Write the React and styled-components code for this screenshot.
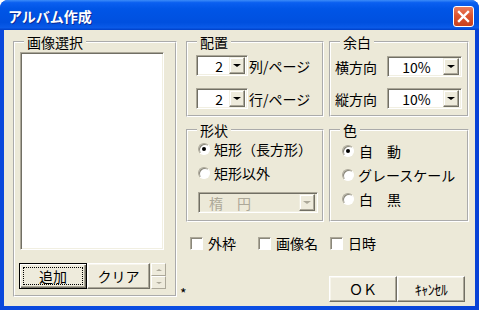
import React from "react"
import styled, { createGlobalStyle, css } from "styled-components"

const GlobalStyle = createGlobalStyle`
  html, body {
    margin: 0;
    padding: 0;
    background: #fff;
  }
  body {
    font-family: "Noto Sans CJK JP", "Liberation Sans", sans-serif;
    font-size: 14px;
    line-height: 14px;
    color: #000;
  }
  * {
    box-sizing: border-box;
  }
`

const Window = styled.div`
  width: 479px;
  height: 310px;
  display: flex;
  flex-direction: column;
  background: linear-gradient(90deg, #0a48dc, #0b4fe4 50%, #0842d6);
  border-radius: 8px 8px 0 0;
  overflow: hidden;
`

const TitleBar = styled.div`
  height: 30px;
  flex: none;
  display: flex;
  align-items: center;
  justify-content: space-between;
  padding: 2px 5px 0 8px;
  background: linear-gradient(
    180deg,
    #3c8cf8 0%,
    #0a5ff0 9%,
    #0055e6 30%,
    #0050df 75%,
    #0a5ae8 92%,
    #0040c8 100%
  );
`

const Title = styled.span`
  color: #fff;
  font-weight: bold;
  font-size: 14px;
  line-height: 16px;
  text-shadow: 1px 1px 0 #0a2a9a;
`

const Close = styled.div`
  width: 21px;
  height: 21px;
  border: 1px solid #fff;
  border-radius: 3px;
  display: flex;
  align-items: center;
  justify-content: center;
  background: linear-gradient(180deg, #ea7d5e 0%, #dd5530 45%, #c8401c 100%);
`

const Client = styled.div`
  flex: 1;
  margin: 0 4px 4px;
  background: #ece9d8;
  display: grid;
  grid-template-columns: 164px 283px;
  column-gap: 9px;
  padding: 5px 0 0 9px;
`

const Group = styled.fieldset`
  margin: 0;
  padding: 0;
  min-width: 0;
  height: ${p => p.h}px;
  border: 2px groove #fff;
`

const Legend = styled.legend`
  margin-left: 9px;
  padding: 0 3px;
  font-size: 14px;
  line-height: 14px;
`

const Body = styled.div`
  display: flex;
  flex-direction: column;
  align-items: flex-start;
  padding: ${p => p.pad};
  gap: ${p => p.gap || 0}px;
`

const List = styled.div`
  width: 144px;
  height: 198px;
  margin-left: 1px;
  background: #fff;
  border: 1px solid;
  border-color: #aca899 #fff #fff #aca899;
  box-shadow: inset 1px 1px 0 #716f64, inset -1px -1px 0 #f1efe2;
`

const BtnRow = styled.div`
  display: flex;
  margin-top: ${p => p.top || 0}px;
`

const Btn = styled.div`
  width: ${p => p.w}px;
  height: 26px;
  display: flex;
  align-items: center;
  justify-content: center;
  background: #eeebdc;
  border: 1px solid;
  border-color: #fff #716f64 #716f64 #fff;
  box-shadow: inset -1px -1px 0 #aca899, inset 1px 1px 0 #f7f5ec;
  ${p =>
    p.primary &&
    css`
      border-color: #000;
      padding: 3px;
      box-shadow: inset 1px 1px 0 #fff, inset -1px -1px 0 #716f64,
        inset -2px -2px 0 #aca899;
    `}
`

const Focus = styled.span`
  flex: 1;
  align-self: stretch;
  display: flex;
  align-items: center;
  justify-content: center;
  border: 1px dotted #000;
`

const Spin = styled.div`
  width: 15px;
  height: 26px;
  margin-left: 1px;
  display: flex;
  flex-direction: column;
`

const SpinBtn = styled.div`
  flex: 1;
  display: flex;
  align-items: center;
  justify-content: center;
  background: #eeebdc;
  border: 1px solid;
  border-color: #fff #aca899 #aca899 #fff;
`

const Arrow = styled.span`
  width: 0;
  height: 0;
  border-left: ${p => p.size}px solid transparent;
  border-right: ${p => p.size}px solid transparent;
  ${p =>
    p.up
      ? css`border-bottom: ${p.size - 1}px solid ${p.color};`
      : css`border-top: ${p.size - 1}px solid ${p.color};`}
`

const Side = styled.div`
  display: flex;
  flex-direction: column;
`

const GroupGrid = styled.div`
  display: grid;
  grid-template-columns: 138px 140px;
  column-gap: 5px;
  row-gap: 6px;
`

const Line = styled.div`
  display: flex;
  align-items: center;
  height: ${p => p.h || 21}px;
  gap: ${p => p.gap || 0}px;
  margin-top: ${p => p.top || 0}px;
`

const Label = styled.span`
  width: ${p => (p.w ? `${p.w}px` : "auto")};
  white-space: nowrap;
  color: ${p => (p.disabled ? "#aca899" : "#000")};
`

const Combo = styled.div`
  width: ${p => p.w}px;
  height: 21px;
  display: flex;
  align-items: center;
  padding: 2px;
  background: ${p => (p.disabled ? "#ece9d8" : "#fff")};
  border: 1px solid;
  border-color: #aca899 #fff #fff #aca899;
  box-shadow: inset 1px 1px 0 #716f64, inset -1px -1px 0 #f1efe2;
`

const Value = styled.span`
  flex: 1;
  text-align: ${p => p.align};
  padding: ${p => p.pad || "0"};
  color: ${p => (p.disabled ? "#aca899" : "#000")};
  white-space: pre;
`

const DropBtn = styled.div`
  width: 16px;
  height: 17px;
  flex: none;
  display: flex;
  align-items: center;
  justify-content: center;
  background: #eeebdc;
  border: 1px solid;
  border-color: #f1efe2 #716f64 #716f64 #f1efe2;
  box-shadow: inset -1px -1px 0 #aca899, inset 1px 1px 0 #fff;
`

const Radio = styled.span`
  width: 12px;
  height: 12px;
  flex: none;
  border-radius: 50%;
  background: #fff;
  border: 1px solid;
  border-color: #aca899 #fff #fff #aca899;
  box-shadow: inset 1px 1px 0 #8a877a;
  display: flex;
  align-items: center;
  justify-content: center;

  &::after {
    content: "";
    width: 4px;
    height: 4px;
    border-radius: 50%;
    background: ${p => (p.checked ? "#000" : "transparent")};
  }
`

const Check = styled.span`
  width: 13px;
  height: 13px;
  flex: none;
  background: #fff;
  border: 1px solid;
  border-color: #aca899 #fff #fff #aca899;
  box-shadow: inset 1px 1px 0 #8a877a;
`

const CheckRow = styled.div`
  display: flex;
  margin-top: 14px;
  padding-left: 4px;
`

const CheckItem = styled.div`
  width: ${p => (p.w ? `${p.w}px` : "auto")};
  display: flex;
  align-items: center;
  gap: 5px;
  height: 14px;
`

const Footer = styled.div`
  display: flex;
  justify-content: space-between;
  align-items: flex-end;
  margin-top: 26px;
  padding-right: 4px;
`

const Star = styled.span`
  margin-left: -6px;
  margin-bottom: 2px;
`

const Half = styled.span`
  font-size: 14px;
  letter-spacing: -0.5px;
`

const Drop = ({ disabled }) => (
  <DropBtn>
    <Arrow size={4} color={disabled ? "#aca899" : "#000"} />
  </DropBtn>
)

const App = () => (
  <>
    <GlobalStyle />
    <Window>
      <TitleBar>
        <Title>アルバム作成</Title>
        <Close>
          <svg width="13" height="13" viewBox="0 0 13 13">
            <path d="M2 2 L11 11 M11 2 L2 11" stroke="#fff" strokeWidth="2.4" strokeLinecap="square" />
          </svg>
        </Close>
      </TitleBar>
      <Client>
        <Group h={262}>
          <Legend>画像選択</Legend>
          <Body pad="3px 0 0 4px">
            <List />
            <BtnRow top={13}>
              <Btn w={68} primary>
                <Focus>追加</Focus>
              </Btn>
              <Btn w={63}>クリア</Btn>
              <Spin>
                <SpinBtn>
                  <Arrow up size={3} color="#aca899" />
                </SpinBtn>
                <SpinBtn>
                  <Arrow size={3} color="#aca899" />
                </SpinBtn>
              </Spin>
            </BtnRow>
          </Body>
        </Group>

        <Side>
          <GroupGrid>
            <Group h={82}>
              <Legend>配置</Legend>
              <Body pad="6px 0 0 8px" gap={12}>
                <Line gap={1}>
                  <Combo w={52}>
                    <Value align="right" pad="0 6px 0 0">2</Value>
                    <Drop />
                  </Combo>
                  <Label>列/ページ</Label>
                </Line>
                <Line gap={1}>
                  <Combo w={52}>
                    <Value align="right" pad="0 6px 0 0">2</Value>
                    <Drop />
                  </Combo>
                  <Label>行/ページ</Label>
                </Line>
              </Body>
            </Group>

            <Group h={82}>
              <Legend>余白</Legend>
              <Body pad="7px 0 0 4px" gap={11}>
                <Line>
                  <Label w={52}>横方向</Label>
                  <Combo w={75}>
                    <Value align="center">10%</Value>
                    <Drop />
                  </Combo>
                </Line>
                <Line>
                  <Label w={52}>縦方向</Label>
                  <Combo w={75}>
                    <Value align="center">10%</Value>
                    <Drop />
                  </Combo>
                </Line>
              </Body>
            </Group>

            <Group h={99}>
              <Legend>形状</Legend>
              <Body pad="0 0 0 10px">
                <Line h={24} gap={4}>
                  <Radio checked />
                  <Label>矩形（長方形）</Label>
                </Line>
                <Line h={24} gap={4}>
                  <Radio />
                  <Label>矩形以外</Label>
                </Line>
                <Line h={21} top={7}>
                  <Combo w={120} disabled>
                    <Value align="left" pad="0 0 0 8px" disabled>楕　円</Value>
                    <Drop disabled />
                  </Combo>
                </Line>
              </Body>
            </Group>

            <Group h={99}>
              <Legend>色</Legend>
              <Body pad="2px 0 0 11px">
                <Line h={24} gap={5}>
                  <Radio checked />
                  <Label>自　動</Label>
                </Line>
                <Line h={24} gap={4}>
                  <Radio />
                  <Label>グレースケール</Label>
                </Line>
                <Line h={24} gap={5}>
                  <Radio />
                  <Label>白　黒</Label>
                </Line>
              </Body>
            </Group>
          </GroupGrid>

          <CheckRow>
            <CheckItem w={68}>
              <Check />
              <Label>外枠</Label>
            </CheckItem>
            <CheckItem w={72}>
              <Check />
              <Label>画像名</Label>
            </CheckItem>
            <CheckItem>
              <Check />
              <Label>日時</Label>
            </CheckItem>
          </CheckRow>

          <Footer>
            <Star>*</Star>
            <BtnRow>
              <Btn w={68}>ＯＫ</Btn>
              <Btn w={68}>
                <Half>ｷｬﾝｾﾙ</Half>
              </Btn>
            </BtnRow>
          </Footer>
        </Side>
      </Client>
    </Window>
  </>
)

export default App
